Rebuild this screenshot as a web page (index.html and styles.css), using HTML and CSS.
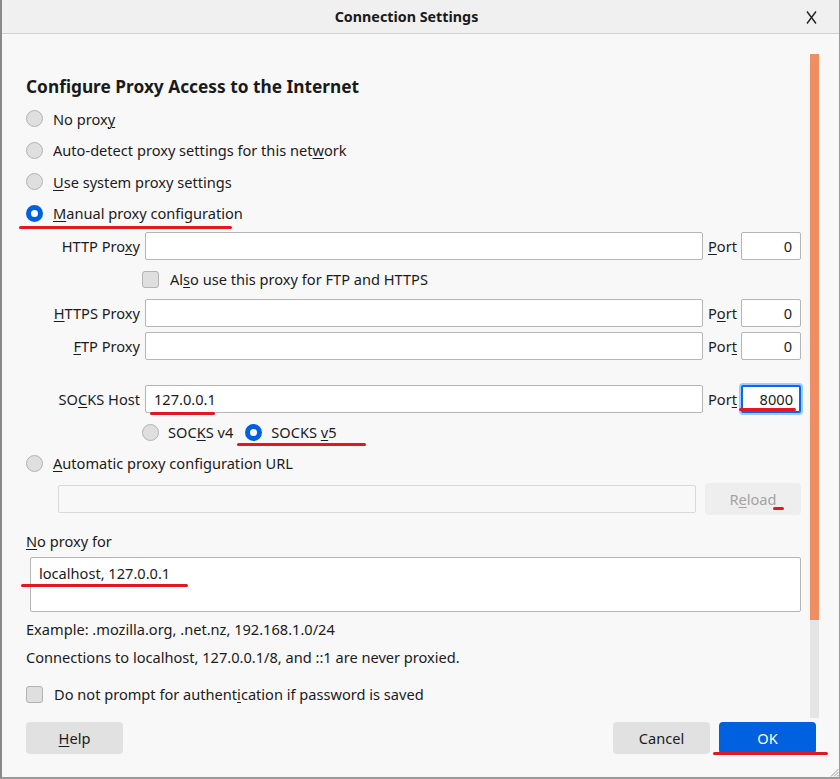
FILE: index.html
```html
<!DOCTYPE html>
<html>
<head>
<meta charset="utf-8">
<title>Connection Settings</title>
<link rel="stylesheet" href="styles.css">
</head>
<body>
<div class="window">
  <div class="titlebar">
    <span></span>
    <span class="title">Connection Settings</span>
    <span class="close"><svg width="11" height="13" viewBox="0 0 11 13"><path d="M1 0.5 L10 12.5 M10 0.5 L1 12.5" stroke="#222" stroke-width="1.4" fill="none"/></svg></span>
  </div>
  <div class="scrollarea">
    <div class="content">
      <h1 class="heading">Configure Proxy Access to the Internet</h1>
      <div class="radio-row"><span class="radio"></span><span>No prox<u>y</u></span></div>
      <div class="radio-row"><span class="radio"></span><span>Auto-detect proxy settings for this net<u>w</u>ork</span></div>
      <div class="radio-row"><span class="radio"></span><span><u>U</u>se system proxy settings</span></div>
      <div class="radio-row"><span class="radio checked"></span><span><u>M</u>anual proxy configuration</span></div>

      <div class="proxy-row first">
        <label class="plabel">HTTP Pro<u>x</u>y</label>
        <div class="input"></div>
        <label class="port"><u>P</u>ort</label>
        <div class="input num">0</div>
      </div>
      <div class="check-row indent"><span class="check"></span><span>Al<u>s</u>o use this proxy for FTP and HTTPS</span></div>
      <div class="proxy-row https">
        <label class="plabel"><u>H</u>TTPS Proxy</label>
        <div class="input"></div>
        <label class="port">P<u>o</u>rt</label>
        <div class="input num">0</div>
      </div>
      <div class="proxy-row ftp">
        <label class="plabel"><u>F</u>TP Proxy</label>
        <div class="input"></div>
        <label class="port">Por<u>t</u></label>
        <div class="input num">0</div>
      </div>
      <div class="proxy-row socks">
        <label class="plabel">SO<u>C</u>KS Host</label>
        <div class="input text">127.0.0.1</div>
        <label class="port">Por<u>t</u></label>
        <div class="input num focused">8000</div>
      </div>
      <div class="socks-ver">
        <div class="radio-inline"><span class="radio"></span><span>SOC<u>K</u>S v4</span></div>
        <div class="radio-inline"><span class="radio checked"></span><span>SOCKS <u>v</u>5</span></div>
      </div>
      <div class="radio-row auto"><span class="radio"></span><span><u>A</u>utomatic proxy configuration URL</span></div>
      <div class="url-row">
        <div class="input disabled"></div>
        <button class="btn reload">R<u>e</u>load</button>
      </div>
      <div class="noproxy-label"><u>N</u>o proxy for</div>
      <div class="textarea">localhost, 127.0.0.1</div>
      <div class="note first-note">Example: .mozilla.org, .net.nz, 192.168.1.0/24</div>
      <div class="note second-note">Connections to localhost, 127.0.0.1/8, and ::1 are never proxied.</div>
      <div class="check-row auth"><span class="check"></span><span>Do not prompt for authent<u>i</u>cation if password is saved</span></div>
    </div>
    <div class="scrollbar"><div class="thumb"></div></div>
  </div>
  <div class="footer">
    <button class="btn"><u>H</u>elp</button>
    <span class="spacer"></span>
    <button class="btn">Cancel</button>
    <button class="btn primary">OK</button>
  </div>
  <svg class="grip" width="9" height="9" viewBox="0 0 9 9"><path d="M8.5 1 L1 8.5 M8.5 4 L4 8.5 M8.5 7 L7 8.5" stroke="#999" stroke-width="1" fill="none"/></svg>

  <span class="mark m-manual"></span>
  <span class="mark m-host"></span>
  <span class="mark m-port"></span>
  <span class="mark m-v5"></span>
  <span class="mark m-reload"></span>
  <span class="mark m-local"></span>
  <span class="mark m-ok"></span>
</div>
</body>
</html>
```

FILE: styles.css
```css
* { box-sizing: border-box; }
html, body { margin: 0; padding: 0; }
body {
  width: 840px;
  height: 779px;
  overflow: hidden;
  background: #6a6a6a;
  font-family: "Noto Sans", "Open Sans", sans-serif;
  font-size: 14.6px;
  color: #1c1b22;
}
u { text-decoration: underline; text-underline-offset: 2px; text-decoration-thickness: 1px; }

.window {
  position: relative;
  width: 840px;
  height: 779px;
  background: #f8f8f8;
  border-left: 2px solid #8a8a8a;
  border-right: 1px solid #9a9a9a;
  border-bottom: 2px solid #9a9a9a;
  display: flex;
  flex-direction: column;
}

.titlebar {
  height: 34px;
  flex: none;
  background: #f0f0f0;
  border-bottom: 1px solid #d2d2d2;
  display: grid;
  grid-template-columns: 1fr auto 1fr;
  align-items: center;
}
.title {
  font-weight: bold;
  font-size: 14.3px;
  color: #1a1a1a;
  margin-right: 28px;
}
.close { justify-self: end; padding-right: 22px; display: flex; padding-top: 1px; }

.scrollarea {
  height: 684px;
  flex: none;
  display: flex;
  padding-right: 20px;
}
.content {
  flex: 1;
  padding: 41px 9px 0 24px;
  display: flex;
  flex-direction: column;
}
.scrollbar {
  width: 9px;
  margin-top: 20px;
  background: #e5e5e5;
  display: flex;
  flex-direction: column;
}
.thumb { height: 566px; background: #ef8e63; }

.heading {
  margin: 0 0 4px 0;
  height: 24px;
  line-height: 24px;
  font-size: 17.3px;
  font-weight: bold;
  color: #1a1a1a;
}

.radio-row {
  height: 31.5px;
  display: flex;
  align-items: center;
  gap: 10px;
}
.radio {
  width: 17px;
  height: 17px;
  border-radius: 50%;
  background: #dfdfdf;
  border: 1px solid #b3b3b3;
  flex: none;
}
.radio.checked {
  background: #fff;
  border: 5px solid #0061e0;
}

.proxy-row {
  display: grid;
  grid-template-columns: 114px 1fr auto 60px;
  column-gap: 5px;
  align-items: center;
  height: 28px;
}
.proxy-row.first { margin-top: 3px; }
.proxy-row.https { margin-top: 6px; }
.proxy-row.ftp { margin-top: 5px; }
.proxy-row.socks { margin-top: 25px; }
.plabel { text-align: right; }
.port { width: 28px; }
.input {
  height: 28px;
  background: #fff;
  border: 1px solid #b5b5b5;
  border-radius: 2px;
  padding: 0 8px;
  display: flex;
  align-items: center;
}
.input.num { justify-content: flex-end; }
.input.text { padding-left: 8px; }
.input.focused {
  border: 2px solid #0a69ea;
  box-shadow: 0 0 0 2px #9fcbff;
  padding-right: 6px;
}
.input.disabled { background: #f8f8f8; border-color: #d9d9d9; flex: 1; }

.check-row {
  height: 28px;
  display: flex;
  align-items: center;
  gap: 11px;
}
.check-row.indent { margin-top: 5px; padding-left: 116px; }
.check {
  width: 17px;
  height: 17px;
  border-radius: 3px;
  background: #dfdfdf;
  border: 1px solid #b3b3b3;
  flex: none;
}

.socks-ver {
  margin-top: 5px;
  height: 28px;
  display: flex;
  align-items: center;
  padding-left: 116px;
  gap: 12px;
}
.radio-inline { display: flex; align-items: center; gap: 9px; }
.radio-row.auto { margin-top: 3px; height: 28px; }

.url-row {
  margin-top: 6px;
  height: 32px;
  display: flex;
  align-items: center;
  padding-left: 32px;
  gap: 9px;
}

.btn {
  font-family: inherit;
  font-size: 14.6px;
  color: #1c1b22;
  border: none;
  border-radius: 4px;
  background: #e1e1e1;
  height: 32px;
  width: 97px;
  padding: 0;
}
.btn.reload { width: 96px; background: #eeeeee; color: #a3a3a3; }
.btn.primary { background: #0061e0; color: #fff; }

.noproxy-label { margin-top: 16px; line-height: 20px; height: 20px; }
.textarea {
  margin-top: 6px;
  margin-left: 4px;
  height: 55px;
  background: #fff;
  border: 1px solid #b5b5b5;
  border-radius: 2px;
  padding: 4px 8px;
  line-height: 22px;
}
.note { line-height: 20px; height: 20px; }
.first-note { margin-top: 7px; }
.second-note { margin-top: 8px; }
.check-row.auth { margin-top: 13px; }

.footer {
  flex: 1;
  display: flex;
  align-items: flex-start;
  padding: 4px 23px 0 24px;
  gap: 9px;
}
.spacer { flex: 1; }

.grip { position: absolute; right: 0; bottom: 0; }

.mark {
  position: absolute;
  height: 3px;
  background: #e3171f;
  border-radius: 2px;
}
.m-manual { left: 17px; width: 213px; top: 226px; }
.m-host { left: 148px; width: 65px; top: 412px; }
.m-port { left: 737px; width: 57px; top: 408px; }
.m-v5 { left: 235px; width: 129px; top: 443px; }
.m-reload { left: 771px; width: 11px; top: 507px; }
.m-local { left: 19px; width: 167px; top: 584px; }
.m-ok { left: 711px; width: 115px; top: 752px; }
```
